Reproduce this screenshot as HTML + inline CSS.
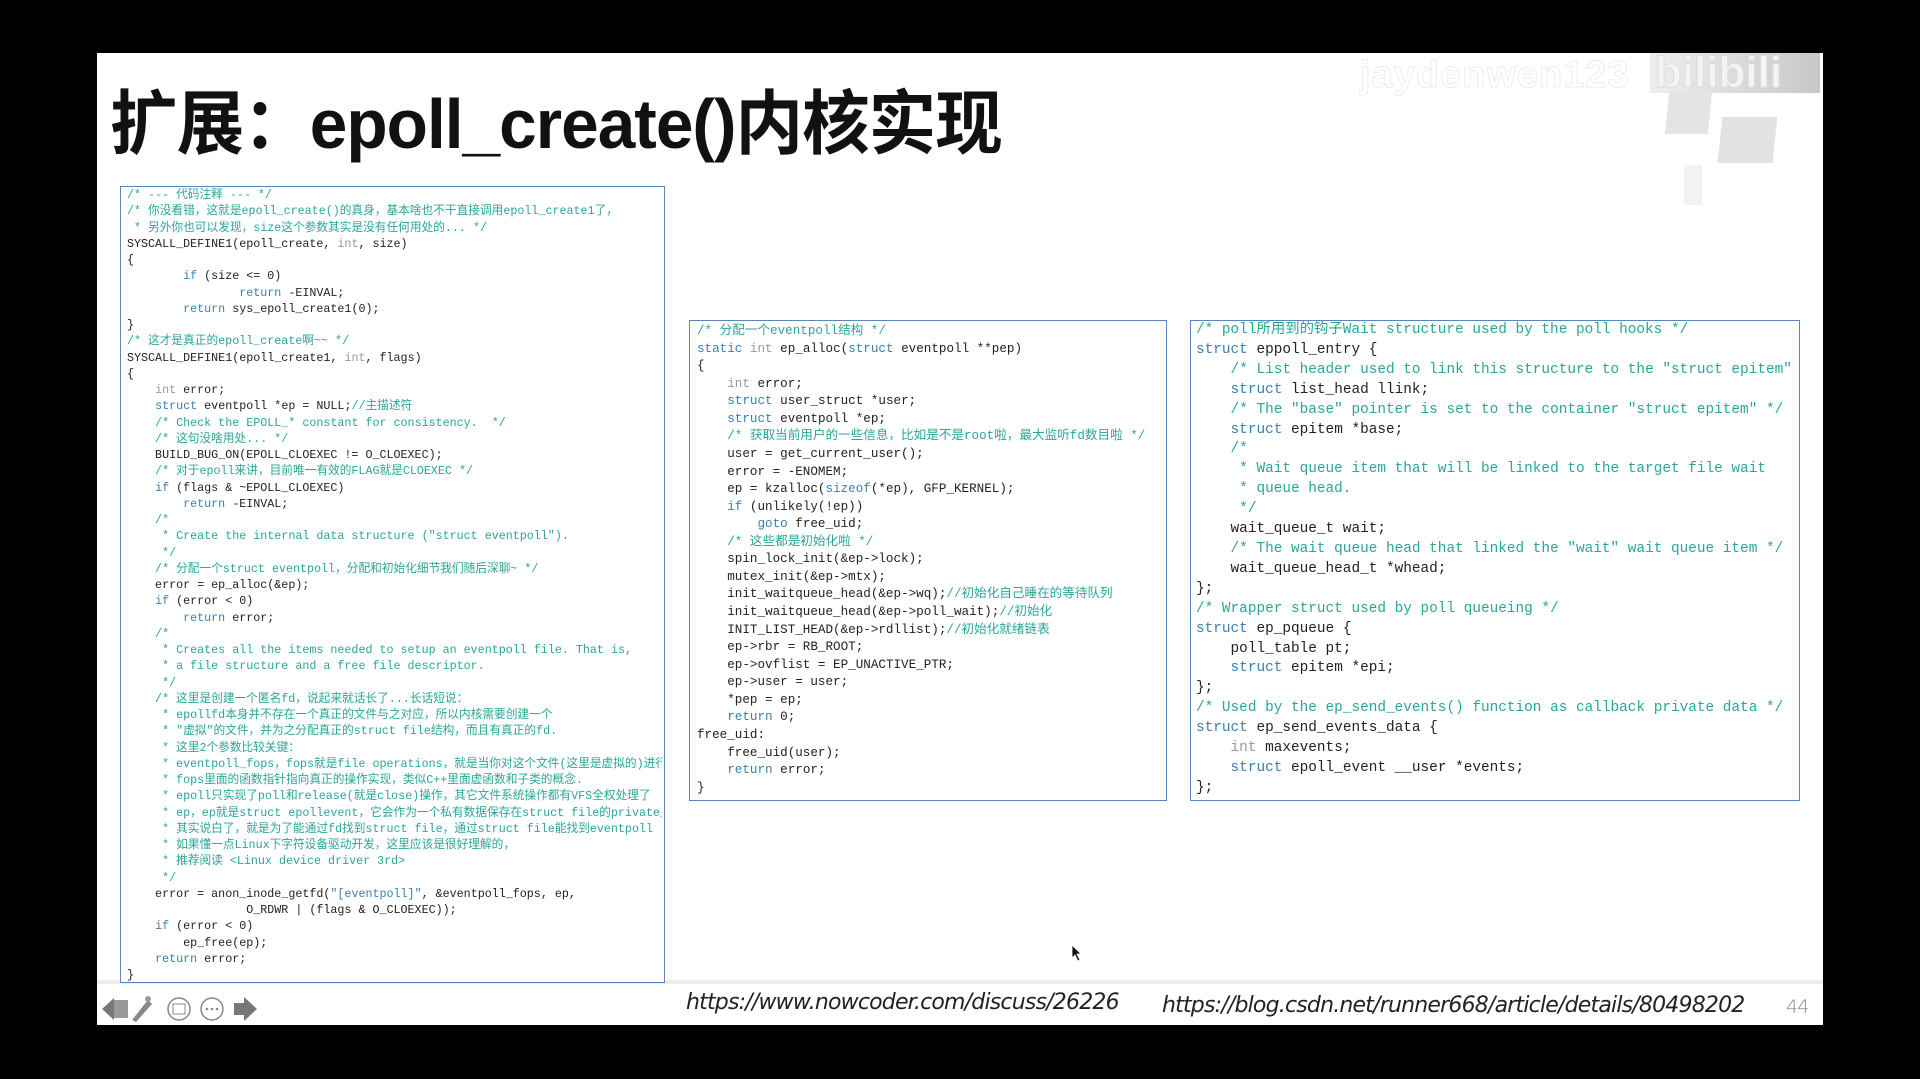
<!DOCTYPE html>
<html><head><meta charset="utf-8"><style>
body{margin:0;width:1920px;height:1079px;background:#000;position:relative;overflow:hidden;font-family:"Liberation Sans","Noto Sans CJK SC",sans-serif}
.slide{position:absolute;left:97px;top:53px;width:1726px;height:972px;background:#fff}
.title{position:absolute;left:110px;top:68px;font-size:70px;font-weight:bold;color:#111;white-space:nowrap;letter-spacing:-1px;transform:scaleX(0.965);transform-origin:left top;font-family:"Liberation Sans","Noto Sans CJK SC",sans-serif}
.box{position:absolute;border:1.5px solid #5b86b8;background:#fff;box-sizing:border-box}
pre{margin:0;font-family:"Liberation Mono","Noto Sans CJK SC",monospace;color:#222;white-space:pre;overflow:hidden}
.c{color:#2aa697}.k{color:#3a7fb0}.g{color:#999}.s{color:#3a7fb0}
#b1{left:120px;top:186px;width:545px;height:797px}
#b1 pre{position:absolute;left:6px;top:0;font-size:11.7px;line-height:16.25px;width:535px}
#b2{left:689px;top:320px;width:478px;height:481px}
#b2 pre{position:absolute;left:7px;top:2px;font-size:12.6px;line-height:17.57px}
#b3{left:1190px;top:320px;width:610px;height:481px}
#b3 pre{position:absolute;left:5px;top:0;font-size:14.4px;line-height:19.9px;width:602px}
.url{position:absolute;top:990px;font-size:22px;font-style:italic;color:#222;font-family:"DejaVu Sans","Liberation Sans",sans-serif;font-weight:200;letter-spacing:-0.8px;white-space:nowrap}
</style></head><body>
<div class="slide"></div>
<div style="position:absolute;left:97px;top:980px;width:1726px;height:4px;background:#ececec"></div>
<div style="position:absolute;left:1650px;top:53px;width:170px;height:40px;background:linear-gradient(90deg,#eee,#c8c8c8)"></div>
<div style="position:absolute;left:1667px;top:92px;width:43px;height:42px;background:#e4e4e4;transform:skewX(-6deg)"></div>
<div style="position:absolute;left:1720px;top:117px;width:55px;height:46px;background:#e2e2e2;transform:skewX(-6deg)"></div>
<div style="position:absolute;left:1684px;top:165px;width:18px;height:40px;background:#f2f2f2"></div>
<div style="position:absolute;left:1360px;top:54px;font-size:38px;font-weight:bold;color:#fff;-webkit-text-stroke:1px #ededed;letter-spacing:1px">jaydenwen123</div>
<div style="position:absolute;left:1655px;top:48px;font-size:44px;font-weight:bold;color:#f4f4f4;-webkit-text-stroke:1px #dedede">bilibili</div>
<div class="title">扩展：epoll_create()内核实现</div>

<div class="box" id="b1"><pre><span class="c">/* --- 代码注释 --- */
/* 你没看错，这就是epoll_create()的真身，基本啥也不干直接调用epoll_create1了，
 * 另外你也可以发现，size这个参数其实是没有任何用处的... */</span>
SYSCALL_DEFINE1(epoll_create, <span class="g">int</span>, size)
{
        <span class="k">if</span> (size &lt;= 0)
                <span class="k">return</span> -EINVAL;
        <span class="k">return</span> sys_epoll_create1(0);
}
<span class="c">/* 这才是真正的epoll_create啊~~ */</span>
SYSCALL_DEFINE1(epoll_create1, <span class="g">int</span>, flags)
{
    <span class="g">int</span> error;
    <span class="k">struct</span> eventpoll *ep = NULL;<span class="c">//主描述符</span>
    <span class="c">/* Check the EPOLL_* constant for consistency.  */
    /* 这句没啥用处... */</span>
    BUILD_BUG_ON(EPOLL_CLOEXEC != O_CLOEXEC);
    <span class="c">/* 对于epoll来讲，目前唯一有效的FLAG就是CLOEXEC */</span>
    <span class="k">if</span> (flags &amp; ~EPOLL_CLOEXEC)
        <span class="k">return</span> -EINVAL;
    <span class="c">/*
     * Create the internal data structure ("struct eventpoll").
     */
    /* 分配一个struct eventpoll，分配和初始化细节我们随后深聊~ */</span>
    error = ep_alloc(&amp;ep);
    <span class="k">if</span> (error &lt; 0)
        <span class="k">return</span> error;
    <span class="c">/*
     * Creates all the items needed to setup an eventpoll file. That is,
     * a file structure and a free file descriptor.
     */
    /* 这里是创建一个匿名fd，说起来就话长了...长话短说：
     * epollfd本身并不存在一个真正的文件与之对应，所以内核需要创建一个
     * "虚拟"的文件，并为之分配真正的struct file结构，而且有真正的fd.
     * 这里2个参数比较关键：
     * eventpoll_fops，fops就是file operations，就是当你对这个文件(这里是虚拟的)进行操作
     * fops里面的函数指针指向真正的操作实现，类似C++里面虚函数和子类的概念.
     * epoll只实现了poll和release(就是close)操作，其它文件系统操作都有VFS全权处理了
     * ep，ep就是struct epollevent，它会作为一个私有数据保存在struct file的private_data
     * 其实说白了，就是为了能通过fd找到struct file，通过struct file能找到eventpoll
     * 如果懂一点Linux下字符设备驱动开发，这里应该是很好理解的，
     * 推荐阅读 &lt;Linux device driver 3rd&gt;
     */</span>
    error = anon_inode_getfd(<span class="s">"[eventpoll]"</span>, &amp;eventpoll_fops, ep,
                 O_RDWR | (flags &amp; O_CLOEXEC));
    <span class="k">if</span> (error &lt; 0)
        ep_free(ep);
    <span class="k">return</span> error;
}</pre></div>

<div class="box" id="b2"><pre><span class="c">/* 分配一个eventpoll结构 */</span>
<span class="k">static</span> <span class="g">int</span> ep_alloc(<span class="k">struct</span> eventpoll **pep)
{
    <span class="g">int</span> error;
    <span class="k">struct</span> user_struct *user;
    <span class="k">struct</span> eventpoll *ep;
    <span class="c">/* 获取当前用户的一些信息，比如是不是root啦，最大监听fd数目啦 */</span>
    user = get_current_user();
    error = -ENOMEM;
    ep = kzalloc(<span class="k">sizeof</span>(*ep), GFP_KERNEL);
    <span class="k">if</span> (unlikely(!ep))
        <span class="k">goto</span> free_uid;
    <span class="c">/* 这些都是初始化啦 */</span>
    spin_lock_init(&amp;ep-&gt;lock);
    mutex_init(&amp;ep-&gt;mtx);
    init_waitqueue_head(&amp;ep-&gt;wq);<span class="c">//初始化自己睡在的等待队列</span>
    init_waitqueue_head(&amp;ep-&gt;poll_wait);<span class="c">//初始化</span>
    INIT_LIST_HEAD(&amp;ep-&gt;rdllist);<span class="c">//初始化就绪链表</span>
    ep-&gt;rbr = RB_ROOT;
    ep-&gt;ovflist = EP_UNACTIVE_PTR;
    ep-&gt;user = user;
    *pep = ep;
    <span class="k">return</span> 0;
free_uid:
    free_uid(user);
    <span class="k">return</span> error;
}</pre></div>

<div class="box" id="b3"><pre><span class="c">/* poll所用到的钩子Wait structure used by the poll hooks */</span>
<span class="k">struct</span> eppoll_entry {
    <span class="c">/* List header used to link this structure to the "struct epitem" */</span>
    <span class="k">struct</span> list_head llink;
    <span class="c">/* The "base" pointer is set to the container "struct epitem" */</span>
    <span class="k">struct</span> epitem *base;
    <span class="c">/*
     * Wait queue item that will be linked to the target file wait
     * queue head.
     */</span>
    wait_queue_t wait;
    <span class="c">/* The wait queue head that linked the "wait" wait queue item */</span>
    wait_queue_head_t *whead;
};
<span class="c">/* Wrapper struct used by poll queueing */</span>
<span class="k">struct</span> ep_pqueue {
    poll_table pt;
    <span class="k">struct</span> epitem *epi;
};
<span class="c">/* Used by the ep_send_events() function as callback private data */</span>
<span class="k">struct</span> ep_send_events_data {
    <span class="g">int</span> maxevents;
    <span class="k">struct</span> epoll_event __user *events;
};</pre></div>

<div class="url" style="left:686px">https://www.nowcoder.com/discuss/26226</div>
<div class="url" style="left:1162px;top:993px">https://blog.csdn.net/runner668/article/details/80498202</div>
<div class="url" style="left:1786px;top:996px;font-size:19px;color:#888;font-style:normal">44</div>

<svg style="position:absolute;left:100px;top:992px" width="160" height="34" viewBox="0 0 160 34">
<path d="M2 17 L14 6 L14 28 Z" fill="#777"/><rect x="14" y="8" width="14" height="18" fill="#999"/>
<path d="M32 28 L48 8 L52 12 L36 30 Z" fill="#888"/><circle cx="48" cy="7" r="3" fill="#999"/>
<circle cx="79" cy="17" r="11" fill="none" stroke="#888" stroke-width="1.5"/><rect x="73" y="12" width="12" height="10" fill="none" stroke="#888"/>
<circle cx="112" cy="17" r="11" fill="none" stroke="#888" stroke-width="1.5"/><circle cx="107" cy="17" r="1.3" fill="#888"/><circle cx="112" cy="17" r="1.3" fill="#888"/><circle cx="117" cy="17" r="1.3" fill="#888"/>
<rect x="134" y="11" width="10" height="12" fill="#777"/><path d="M144 5 L157 17 L144 29 Z" fill="#777"/>
</svg>
<svg style="position:absolute;left:1071px;top:944px" width="12" height="18" viewBox="0 0 12 18"><path d="M1 1 L1 14 L4 11 L7 17 L9 16 L6 10 L10 10 Z" fill="#111" stroke="#fff" stroke-width="0.8"/></svg>
</body></html>
